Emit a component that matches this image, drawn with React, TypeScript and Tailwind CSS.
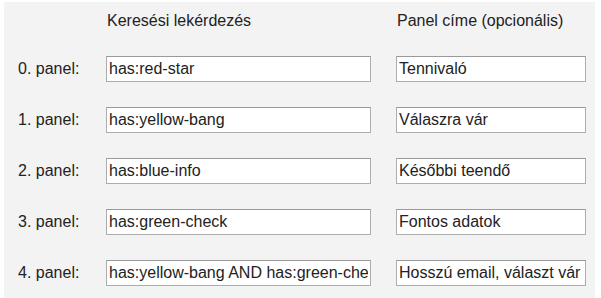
import React from "react";

const rows = [
  { label: "0. panel:", query: "has:red-star", title: "Tennivaló" },
  { label: "1. panel:", query: "has:yellow-bang", title: "Válaszra vár" },
  { label: "2. panel:", query: "has:blue-info", title: "Későbbi teendő" },
  { label: "3. panel:", query: "has:green-check", title: "Fontos adatok" },
  { label: "4. panel:", query: "has:yellow-bang AND has:green-check", title: "Hosszú email, választ vár" },
];

export default function App() {
  return (
    <div
      className="w-[601px] h-[298px] bg-white overflow-hidden text-[#222] text-[16px]"
      style={{ fontFamily: '"Liberation Sans", Arial, sans-serif' }}
    >
      <div className="ml-[4px] mt-[2px] w-[591px] h-[296px] bg-[#f3f3f3] pt-[10px] pl-[14px]">
        <div className="flex leading-[18px]">
          <div className="w-[88px]" />
          <div className="w-[290px] pl-[1px]">Keresési lekérdezés</div>
          <div className="pl-[1px]">Panel címe (opcionális)</div>
        </div>
        <div className="mt-[26px] flex flex-col gap-[25px]">
          {rows.map((r) => (
            <div key={r.label} className="flex items-center h-[26px]">
              <div className="w-[88px]">{r.label}</div>
              <input
                readOnly
                defaultValue={r.query}
                className="w-[265px] h-[26px] bg-white border border-[#adadad] border-t-[#9a9a9a] px-[2px] text-[16px] text-[#222] outline-none"
                style={{ fontFamily: '"Liberation Sans", Arial, sans-serif' }}
              />
              <div className="w-[25px]" />
              <input
                readOnly
                defaultValue={r.title}
                className="w-[190px] h-[26px] bg-white border border-[#adadad] border-t-[#9a9a9a] px-[2px] text-[16px] text-[#222] outline-none"
                style={{ fontFamily: '"Liberation Sans", Arial, sans-serif' }}
              />
            </div>
          ))}
        </div>
      </div>
    </div>
  );
}
